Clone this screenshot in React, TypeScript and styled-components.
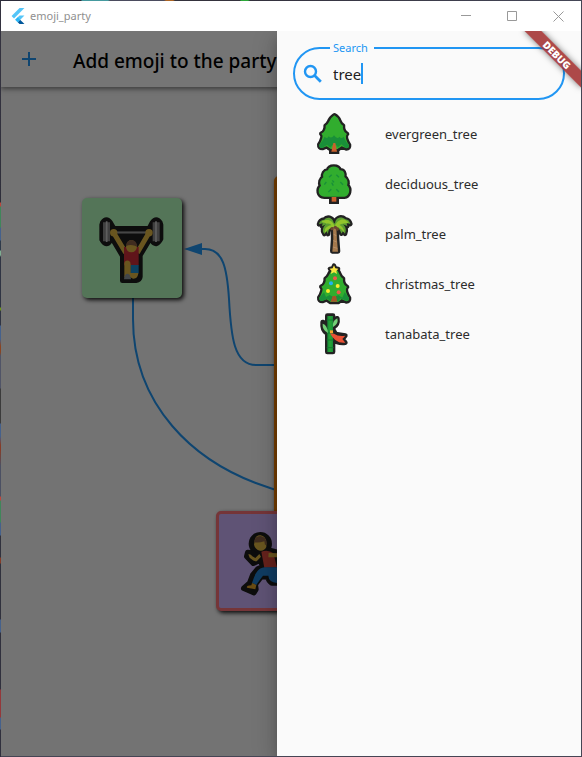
import React, { useState } from "react";
import styled, { createGlobalStyle } from "styled-components";
import { MdAdd } from "react-icons/md";

const BLUE = "#2196f3";
const OUTLINE = "#222222";

const GlobalStyle = createGlobalStyle`
  * { box-sizing: border-box; }
  body { margin: 0; font-family: "Noto Sans", "Open Sans", sans-serif; }
  button { border: 0; padding: 0; background: none; font: inherit; color: inherit; }
`;

const Desktop = styled.div`
  min-height: 100vh;
  padding: 1px;
  display: grid;
  grid-template-rows: 30px 1fr;
  background:
    linear-gradient(90deg, #2c2c3a 81px, #459a9f 82px 108px, #4b4c5e 110px 164px, #ad6524 166px 173px, #34323c 175px 240px, #2ba838 241px 248px, #33313d 250px, #454757) top / 100% 1px no-repeat,
    linear-gradient(#33323f 80px, #2e2e3a 202px, #bd473c 203px 206px, #40865a 207px 227px, #45618c 228px 240px, #2e3a4a 241px 250px, #7fae91 251px 255px, #2f3443 257px 307px, #6d9816 308px 310px, #2f3443 311px 325px, #45618c 326px 339px, #8a4420 346px 352px, #505467 356px 388px, #3b3b3b 389px 423px, #45618c 424px 436px, #863c27 445px 450px, #4b5063 466px 496px, #bd473c 497px 500px, #40865a 501px 522px, #45618c 523px 535px, #30313d 536px 557px, #863c27 558px 563px, #30313d 564px 619px, #45618c 620px 632px, #30303d 633px 689px, #94383a 690px 717px, #45618c 718px 729px, #30303d 730px) left / 1px 100% no-repeat,
    #454554;
`;

const TitleBar = styled.header`
  display: flex;
  align-items: center;
  background: #fff;
  color: #8f8f8f;
  font-size: 11px;
  line-height: 16px;
`;

const AppName = styled.span`
  flex: 1;
  margin-left: 4px;
`;

const FlutterLogo = styled.svg`
  width: 16px;
  height: 16px;
  margin-left: 9px;
`;

const WindowButton = styled.button`
  width: 46px;
  height: 30px;
  display: grid;
  place-items: center;
  color: #999;
`;

const Content = styled.div`
  position: relative;
  overflow: hidden;
  display: grid;
  grid-template-rows: 56px 1fr;
  background: #fafafa;
`;

const AppBar = styled.div`
  z-index: 1;
  display: flex;
  align-items: center;
  gap: 16px;
  background: #fff;
  box-shadow: 0 2px 4px rgba(0, 0, 0, 0.35), 0 1px 8px rgba(0, 0, 0, 0.2);
`;

const AddButton = styled.button`
  width: 56px;
  height: 56px;
  display: grid;
  place-items: center;
  color: ${BLUE};
`;

const PageTitle = styled.h1`
  margin: 0;
  padding-top: 4px;
  font-size: 19px;
  font-weight: 500;
  line-height: 28px;
  color: #000;
  white-space: nowrap;
`;

const Canvas = styled.main`
  position: relative;
  overflow: hidden;
`;

const Edges = styled.svg`
  position: absolute;
  left: 0;
  top: 0;
  width: 300px;
  height: 500px;
`;

const Node = styled.div<{ $x: number; $y: number; $w?: number; $h?: number; $fill: string; $border?: string }>`
  position: absolute;
  left: ${(p) => p.$x}px;
  top: ${(p) => p.$y}px;
  width: ${(p) => p.$w ?? 100}px;
  height: ${(p) => p.$h ?? 100}px;
  border: ${(p) => (p.$border ? `3px solid ${p.$border}` : "0")};
  border-radius: 5px;
  background: ${(p) => p.$fill};
  box-shadow: 2px 2px 4px rgba(0, 0, 0, 0.9);
  svg { display: block; width: 100%; height: 100%; }
`;

const Scrim = styled.div`
  position: absolute;
  inset: 0;
  z-index: 2;
  background: rgba(0, 0, 0, 0.54);
`;

const Drawer = styled.aside`
  position: absolute;
  z-index: 3;
  top: 0;
  right: 0;
  bottom: 0;
  width: 304px;
  padding: 16px;
  background: #fafafa;
  box-shadow: 0 8px 10px rgba(0, 0, 0, 0.14), 0 6px 24px rgba(0, 0, 0, 0.22);
`;

const SearchField = styled.div`
  position: relative;
  display: flex;
  align-items: center;
  gap: 8px;
  height: 53px;
  padding-left: 6px;
  border: 2px solid ${BLUE};
  border-radius: 27px;
  color: ${BLUE};
`;

const SearchLabel = styled.label`
  position: absolute;
  left: 35px;
  top: -9px;
  padding: 0 6px 0 3px;
  background: #fafafa;
  font-size: 11px;
  line-height: 16px;
`;

const SearchInput = styled.input`
  field-sizing: content;
  max-width: 200px;
  padding: 0;
  border: 0;
  outline: 0;
  background: none;
  color: #212121;
  caret-color: transparent;
  font: 15px/24px "Noto Sans", sans-serif;
`;

const Caret = styled.span`
  width: 2px;
  height: 21px;
  margin-left: -8px;
  background: ${BLUE};
`;

const Results = styled.ul`
  margin: 9px 0 0;
  padding: 0 16px;
  list-style: none;
`;

const Result = styled.button`
  width: 100%;
  height: 50px;
  display: flex;
  align-items: center;
  gap: 26px;
  font-size: 13px;
  line-height: 20px;
  color: #2c2c2c;
  text-align: left;
  svg { width: 50px; height: 50px; }
`;

const BannerCorner = styled.div`
  position: absolute;
  z-index: 4;
  top: 0;
  right: 0;
  width: 64px;
  height: 64px;
  overflow: hidden;
  pointer-events: none;
`;

const Banner = styled.div`
  position: absolute;
  top: 18px;
  right: -16px;
  width: 80px;
  height: 12px;
  transform: rotate(45deg);
  background: rgba(162, 48, 48, 0.88);
  box-shadow: 0 0 6px rgba(0, 0, 0, 0.5);
  color: #fff;
  font: 800 10px/12px "Open Sans", sans-serif;
  text-align: center;
`;

type SilhouetteProps = { d: string; w?: number };
const Silhouette = ({ d, w = 14 }: SilhouetteProps) => (
  <path d={d} fill={OUTLINE} stroke={OUTLINE} strokeWidth={w} strokeLinejoin="round" />
);

const CONIFER =
  "M73 31Q61 39 57 51Q54 58 47 62Q48 68 45 75Q42 83 34 86Q40 91 37 99Q34 110 28 119Q27 129 37 129L50 124L62 132H84L95 124L109 130Q118 130 117 120Q111 111 108 101Q106 91 111 87Q102 82 100 74Q98 67 99 62Q91 57 88 48Q84 37 73 31Z";

const Evergreen = () => (
  <svg viewBox="-3 12 150 150" aria-hidden="true">
    <Silhouette d={CONIFER} />
    <path d="M62 130H83V142H62Z" fill={OUTLINE} stroke={OUTLINE} strokeWidth="10" />
    <path d={CONIFER} fill="#31ad2e" />
    <path d="M28 119Q38 109 44 95Q52 103 56 94Q64 103 72 91Q82 105 88 95Q94 103 101 95Q107 111 117 120Q118 130 107 129L94 118L84 127L73 113L61 128L51 119L37 129Q26 130 28 119Z" fill="#198f39" />
    <path d="M70 114H76L81 140H64Z" fill="#c9612d" />
    <path d="M61 131L53 127V134H61ZM84 131L92 127V134H84Z" fill={OUTLINE} />
  </svg>
);

const DECIDUOUS =
  "M54 46C57 31 86 31 89 46C102 45 105 56 103 66C114 73 114 84 111 91C123 102 118 124 103 125H43C23 124 22 102 33 92C28 82 32 72 40 67C37 57 43 47 54 46Z";

const Deciduous = () => (
  <svg viewBox="-3 12 150 150" aria-hidden="true">
    <Silhouette d={DECIDUOUS} />
    <path d="M62 125H82V142H62Z" fill={OUTLINE} stroke={OUTLINE} strokeWidth="10" />
    <path d={DECIDUOUS} fill="#31ad2e" />
    <path d="M57 67L65 59M79 59L87 67M43 89L49 81M65 83L70 92M91 81L99 89M55 111L64 103M79 103L87 111M72 82L67 76" stroke="#198f39" strokeWidth="4" />
    <path d="M65 126H79V140H65Z" fill="#c9612d" />
  </svg>
);

const PALM_LEAVES =
  "M72 49C67 29 51 29 43 38C34 38 28 44 27 52L38 49L36 58L48 52C38 60 36 73 43 81L49 73L54 81C54 70 60 61 70 59L75 63C85 59 91 69 94 80L99 73L105 80C110 69 107 58 98 52L112 57L110 48L121 51C119 42 115 38 106 37C93 26 77 32 75 49Z";

const Palm = () => (
  <svg viewBox="-3 6 150 150" aria-hidden="true">
    <Silhouette d="M69 61Q71 95 67 133H84Q81 96 79 61Z" />
    <Silhouette d={PALM_LEAVES} />
    <path d="M69 61Q72 95 67 134H84Q80 96 79 61Z" fill="#a5794d" />
    <path d="M71 82L79 86M70 101L80 105M69 120L82 124" stroke="#b98f69" strokeWidth="3" />
    <path d={PALM_LEAVES} fill="#5c9e31" />
    <path d="M74 58C69 42 55 33 36 43C35 49 46 46 50 50C58 48 62 52 64 55C49 57 42 66 45 77C54 66 64 61 75 60C87 60 96 66 101 76C104 66 96 58 88 54C95 48 106 50 116 48C107 31 82 34 74 58Z" fill="#92c52c" />
    <circle cx="66" cy="65" r="5" fill="#6a462f" />
    <circle cx="76" cy="61" r="5" fill="#6a462f" />
    <circle cx="82" cy="66" r="5" fill="#6a462f" />
  </svg>
);

const STAR = "M72 22L76 31L85 32L79 39L81 48L72 43L62 48L65 39L59 32L68 31Z";

const Christmas = () => (
  <svg viewBox="-3 3 150 150" aria-hidden="true">
    <Silhouette d={CONIFER} />
    <Silhouette d={STAR} w={12} />
    <path d={CONIFER} fill="#31ad2e" />
    <path d="M28 119L42 103L48 117L59 111L72 118L85 111L97 119L104 103L117 120Q118 130 107 128L92 121L84 130H62L52 122L38 128Q26 130 28 119Z" fill="#198f39" />
    <path d="M68 114H78L82 131H62Z" fill="#a35427" />
    <path d={STAR} fill="#fbe642" />
    <circle cx="75" cy="61" r="6" fill="#ea5a47" />
    <circle cx="63" cy="76" r="6" fill="#1fb4f4" />
    <circle cx="83" cy="84" r="6" fill="#fcea2b" />
    <circle cx="54" cy="99" r="6" fill="#fcea2b" />
    <circle cx="86" cy="103" r="6" fill="#ea5a47" />
  </svg>
);

const Tanabata = () => (
  <svg viewBox="-3 3 150 150" aria-hidden="true">
    <Silhouette
      d="M52 23H69V35L82 31Q85 49 71 57L69 64L77 78L106 83L98 93L106 104Q83 107 69 93V132H52V77Q35 68 38 42Q49 46 52 58Z"
    />
    <path d="M52 24H69V132H52Z" fill="#198f39" />
    <path d="M56 24H65V132H56Z" fill="#249f35" />
    <path d="M50 36H71M50 75H71M50 96H71M50 119H71" stroke="#137a30" strokeWidth="3" />
    <path d="M54 75Q36 66 38 47Q52 51 54 75Z" fill="#73cf77" />
    <path d="M69 57Q66 38 82 31Q87 48 69 57Z" fill="#73cf77" />
    <path d="M60 76L72 77Q84 86 106 83L97 93L106 104Q76 108 60 76Z" fill="#ea5034" />
    <path d="M60 67H69V75H60Z" fill="#f5a52a" />
  </svg>
);

const Lifter = () => (
  <svg viewBox="21 24 300 300" role="img" aria-label="Weight lifter">
    <g fill="#1d1d1d" stroke="#1d1d1d" strokeWidth="14" strokeLinejoin="round">
      <path d="M82 98Q94 80 107 98L117 115H222L231 98Q244 80 256 98L258 105V147Q244 174 229 151L223 151L196 196V260Q195 270 183 272H142V198L114 151L107 151Q94 174 80 149V105Z" />
    </g>
    <path d="M112 127H225" stroke="#646464" strokeWidth="8" />
    <path d="M112 128H225" stroke="#a2a2a2" strokeWidth="3" />
    <path d="M84 97H105V154H84ZM233 97H254V154H233Z" fill="#8d8d8d" />
    <path d="M95 94V156M243 94V156" stroke="#cccccc" strokeWidth="5" />
    <path d="M116 128L152 188M222 128L187 188" stroke="#e5ba44" strokeWidth="15" />
    <circle cx="116" cy="128" r="11" fill="#e5ba44" />
    <circle cx="222" cy="128" r="11" fill="#e5ba44" />
    <path d="M147 171H191V226H147Z" fill="#d22f39" />
    <path d="M166 225H191V250H166Z" fill="#1d8fd2" />
    <path d="M148 220Q150 209 161 212Q167 214 167 224V249H190Q189 267 174 266L166 262H148Z" fill="#e5ba44" />
    <path d="M147 268Q148 251 158 251Q167 253 168 268Z" fill="#929ba0" />
    <path d="M153 171Q155 187 169 187Q184 186 186 170Q180 151 169 150Q156 151 153 171Z" fill="#e5ba44" />
    <path d="M153 168Q154 151 169 150Q185 151 187 170Q169 161 153 168Z" fill="#896044" />
  </svg>
);

const Runner = () => (
  <svg viewBox="42 102 282 282" role="img" aria-label="Runner">
    <g stroke="#1d1d1d" fill="#1d1d1d" strokeLinejoin="round">
      <circle cx="166" cy="191" r="35" stroke="none" />
      <path d="M183 208L209 215L240 224V255L216 264L219 309H200Q190 302 189 291L169 290L151 313L153 328L147 338L116 325L134 309L143 285L158 267L173 260L166 240L145 250L125 229L128 217L143 219L153 230Z" strokeWidth="16" />
    </g>
    <path d="M149 182Q151 166 166 166Q183 168 184 188V201Q177 214 165 212Q150 208 147 194Z" fill="#e5ba44" />
    <path d="M148 187Q148 168 166 168Q184 169 186 193L180 195L178 184Q162 189 148 187Z" fill="#896044" />
    <path d="M130 223Q137 221 142 229L151 234L163 222L168 230L155 244Q148 245 134 233Z" fill="#e5ba44" />
    <path d="M169 215Q190 207 205 220L216 262L178 263Z" fill="#dd4a3e" />
    <path d="M191 219L222 220V232H190Z" fill="#e5ba44" />
    <path d="M179 262H216V309Q191 306 190 287L174 287Q162 302 154 315L141 309Q149 283 157 274Q164 264 179 262Z" fill="#2383d5" />
    <path d="M141 309L154 315L151 328L126 323Q123 317 139 316Z" fill="#e5a52c" />
  </svg>
);

const SearchIcon = () => (
  <svg width="24" height="24" viewBox="0 0 24 24" fill="none" stroke="currentColor" aria-hidden="true">
    <circle cx="9.5" cy="9.5" r="5.5" strokeWidth="2.4" />
    <path d="M13.6 13.6L19.8 19.8" strokeWidth="2.8" />
  </svg>
);

const EMOJI = [
  { name: "evergreen_tree", Icon: Evergreen },
  { name: "deciduous_tree", Icon: Deciduous },
  { name: "palm_tree", Icon: Palm },
  { name: "christmas_tree", Icon: Christmas },
  { name: "tanabata_tree", Icon: Tanabata },
];

export default function App() {
  const [query, setQuery] = useState("tree");
  return (
    <>
      <GlobalStyle />
      <Desktop>
        <TitleBar>
          <FlutterLogo viewBox="0 0 24 24" aria-hidden="true">
            <path d="M14.3 0L2.3 12L6 15.7L21.7 0Z" fill="#54c5f8" />
            <path d="M14.3 11.1L7.9 17.5L11.6 21.2L21.7 11.1Z" fill="#54c5f8" />
            <path d="M11.6 21.2L14.3 24H21.7L15.2 17.5Z" fill="#01579b" />
            <path d="M7.9 17.5L11.6 13.8L15.2 17.5L11.6 21.2Z" fill="#29b6f6" />
          </FlutterLogo>
          <AppName>emoji_party</AppName>
          <WindowButton aria-label="Minimize">
            <svg width="11" height="11" viewBox="0 0 11 11"><path d="M0 4.5H10" stroke="currentColor" /></svg>
          </WindowButton>
          <WindowButton aria-label="Maximize">
            <svg width="11" height="11" viewBox="0 0 11 11"><path d="M.5.5H9.5V9.5H.5Z" fill="none" stroke="currentColor" /></svg>
          </WindowButton>
          <WindowButton aria-label="Close">
            <svg width="11" height="11" viewBox="0 0 11 11"><path d="M.5.5L10.5 10.5M10.5.5L.5 10.5" stroke="currentColor" /></svg>
          </WindowButton>
        </TitleBar>
        <Content>
          <AppBar>
            <AddButton aria-label="Add emoji"><MdAdd size={24} /></AddButton>
            <PageTitle>Add emoji to the party</PageTitle>
          </AppBar>
          <Canvas>
            <Edges viewBox="0 0 300 500" aria-hidden="true">
              <g fill="none" stroke={BLUE} strokeWidth="2">
                <path d="M199 162H204C222 162 226 181 228 212C230 250 233 278 255 278H290" />
                <path d="M132 211V232C132 310 184 381 290 407" />
              </g>
              <path d="M183 162L201 156V168Z" fill={BLUE} />
            </Edges>
            <Node $x={81} $y={111} $fill="#b8ffc0"><Lifter /></Node>
            <Node $x={273} $y={89} $w={200} $h={346} $fill="#ffd180" $border="#ff8800" />
            <Node $x={215} $y={424} $fill="#d0b5ff" $border="#ff737b"><Runner /></Node>
          </Canvas>
          <Scrim />
          <Drawer>
            <SearchField>
              <SearchIcon />
              <SearchLabel htmlFor="emoji-search">Search</SearchLabel>
              <SearchInput id="emoji-search" value={query} onChange={(e) => setQuery(e.target.value)} />
              <Caret />
            </SearchField>
            <Results>
              {EMOJI.filter(({ name }) => name.includes(query)).map(({ name, Icon }) => (
                <li key={name}>
                  <Result><Icon />{name}</Result>
                </li>
              ))}
            </Results>
          </Drawer>
          <BannerCorner><Banner>DEBUG</Banner></BannerCorner>
        </Content>
      </Desktop>
    </>
  );
}
